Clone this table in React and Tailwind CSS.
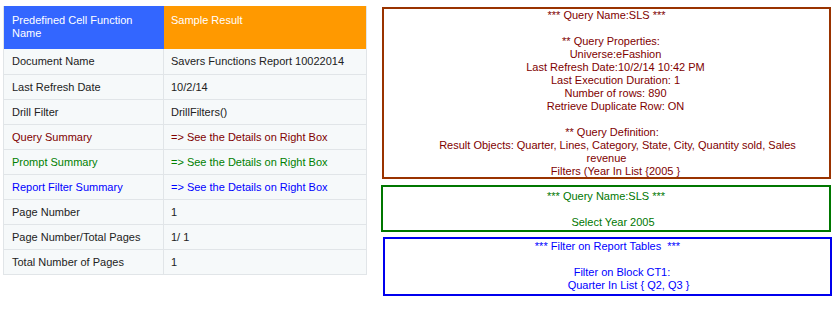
const rows = [
  { name: "Document Name", value: "Savers Functions Report 10022014", color: "text-[#222222]" },
  { name: "Last Refresh Date", value: "10/2/14", color: "text-[#222222]" },
  { name: "Drill Filter", value: "DrillFilters()", color: "text-[#222222]" },
  { name: "Query Summary", value: "=> See the Details on Right Box", color: "text-[#800000]" },
  { name: "Prompt Summary", value: "=> See the Details on Right Box", color: "text-[#008000]" },
  { name: "Report Filter Summary", value: "=> See the Details on Right Box", color: "text-[#0000ff]" },
  { name: "Page Number", value: "1", color: "text-[#222222]" },
  { name: "Page Number/Total Pages", value: "1/ 1", color: "text-[#222222]" },
  { name: "Total Number of Pages", value: "1", color: "text-[#222222]" },
]

function Line({ children, pad = "" }) {
  return <div className={`h-[13px] whitespace-pre ${pad}`}>{children}</div>
}

export default function App() {
  return (
    <div
      className="flex items-start bg-white w-[837px] h-[311px] text-[11px] leading-[13px]"
      style={{ fontFamily: '"Liberation Sans", Arial, sans-serif' }}
    >
      {/* function table */}
      <div className="ml-[3px] mt-[6px] w-[364px] border border-[#e1e5e8] border-t-0">
        <div className="flex">
          <div className="w-[160px] bg-[#3366ff] text-white pt-[8px] pb-[9px] pl-[8px] pr-[4px] h-[43px]">
            Predefined Cell Function Name
          </div>
          <div className="flex-1 bg-[#ff9900] text-white pt-[8px] pl-[7px] h-[43px]">Sample Result</div>
        </div>
        {rows.map((r, i) => (
          <div
            key={i}
            className={`flex h-[25px] bg-[#f6f9fa] ${i > 0 ? "border-t border-[#e1e5e8]" : ""} ${r.color}`}
          >
            <div className="w-[160px] pl-[8px] flex items-center border-r border-[#e1e5e8]">{r.name}</div>
            <div className="flex-1 pl-[7px] flex items-center">{r.value}</div>
          </div>
        ))}
      </div>

      {/* right boxes */}
      <div className="ml-[14px] flex flex-col">
        <div className="ml-[1px] mt-[7px] w-[449px] h-[172px] border-2 border-[#993300] text-[#800000] text-center">
          <Line>*** Query Name:SLS ***</Line>
          <Line> </Line>
          <Line pad="pl-[9px]">** Query Properties:</Line>
          <Line pad="pl-[18px]">Universe:eFashion</Line>
          <Line pad="pl-[18px]">Last Refresh Date:10/2/14 10:42 PM</Line>
          <Line pad="pl-[18px]">Last Execution Duration: 1</Line>
          <Line pad="pl-[18px]">Number of rows: 890</Line>
          <Line pad="pl-[18px]">Retrieve Duplicate Row: ON</Line>
          <Line> </Line>
          <Line pad="pl-[11px]">** Query Definition:</Line>
          <Line pad="pl-[22px]">Result Objects: Quarter, Lines, Category, State, City, Quantity sold, Sales</Line>
          <Line>revenue</Line>
          <Line pad="pl-[18px]">Filters (Year In List {"{"}2005 {"}"}</Line>
        </div>

        <div className="mt-[6px] w-[450px] h-[47px] border-2 border-[#007700] text-[#007700] text-center pt-[3px]">
          <Line>*** Query Name:SLS ***</Line>
          <Line> </Line>
          <Line pad="pl-[14px]">Select Year 2005</Line>
        </div>

        <div className="mt-[5px] ml-[2px] w-[449px] h-[59px] border-2 border-[#0000ee] text-[#0000ff] text-center pt-[1px]">
          <Line>*** Filter on Report Tables  ***</Line>
          <Line> </Line>
          <Line pad="pl-[29px]">Filter on Block CT1:</Line>
          <Line pad="pl-[42px]">Quarter In List {"{"} Q2, Q3 {"}"}</Line>
        </div>
      </div>
    </div>
  )
}
